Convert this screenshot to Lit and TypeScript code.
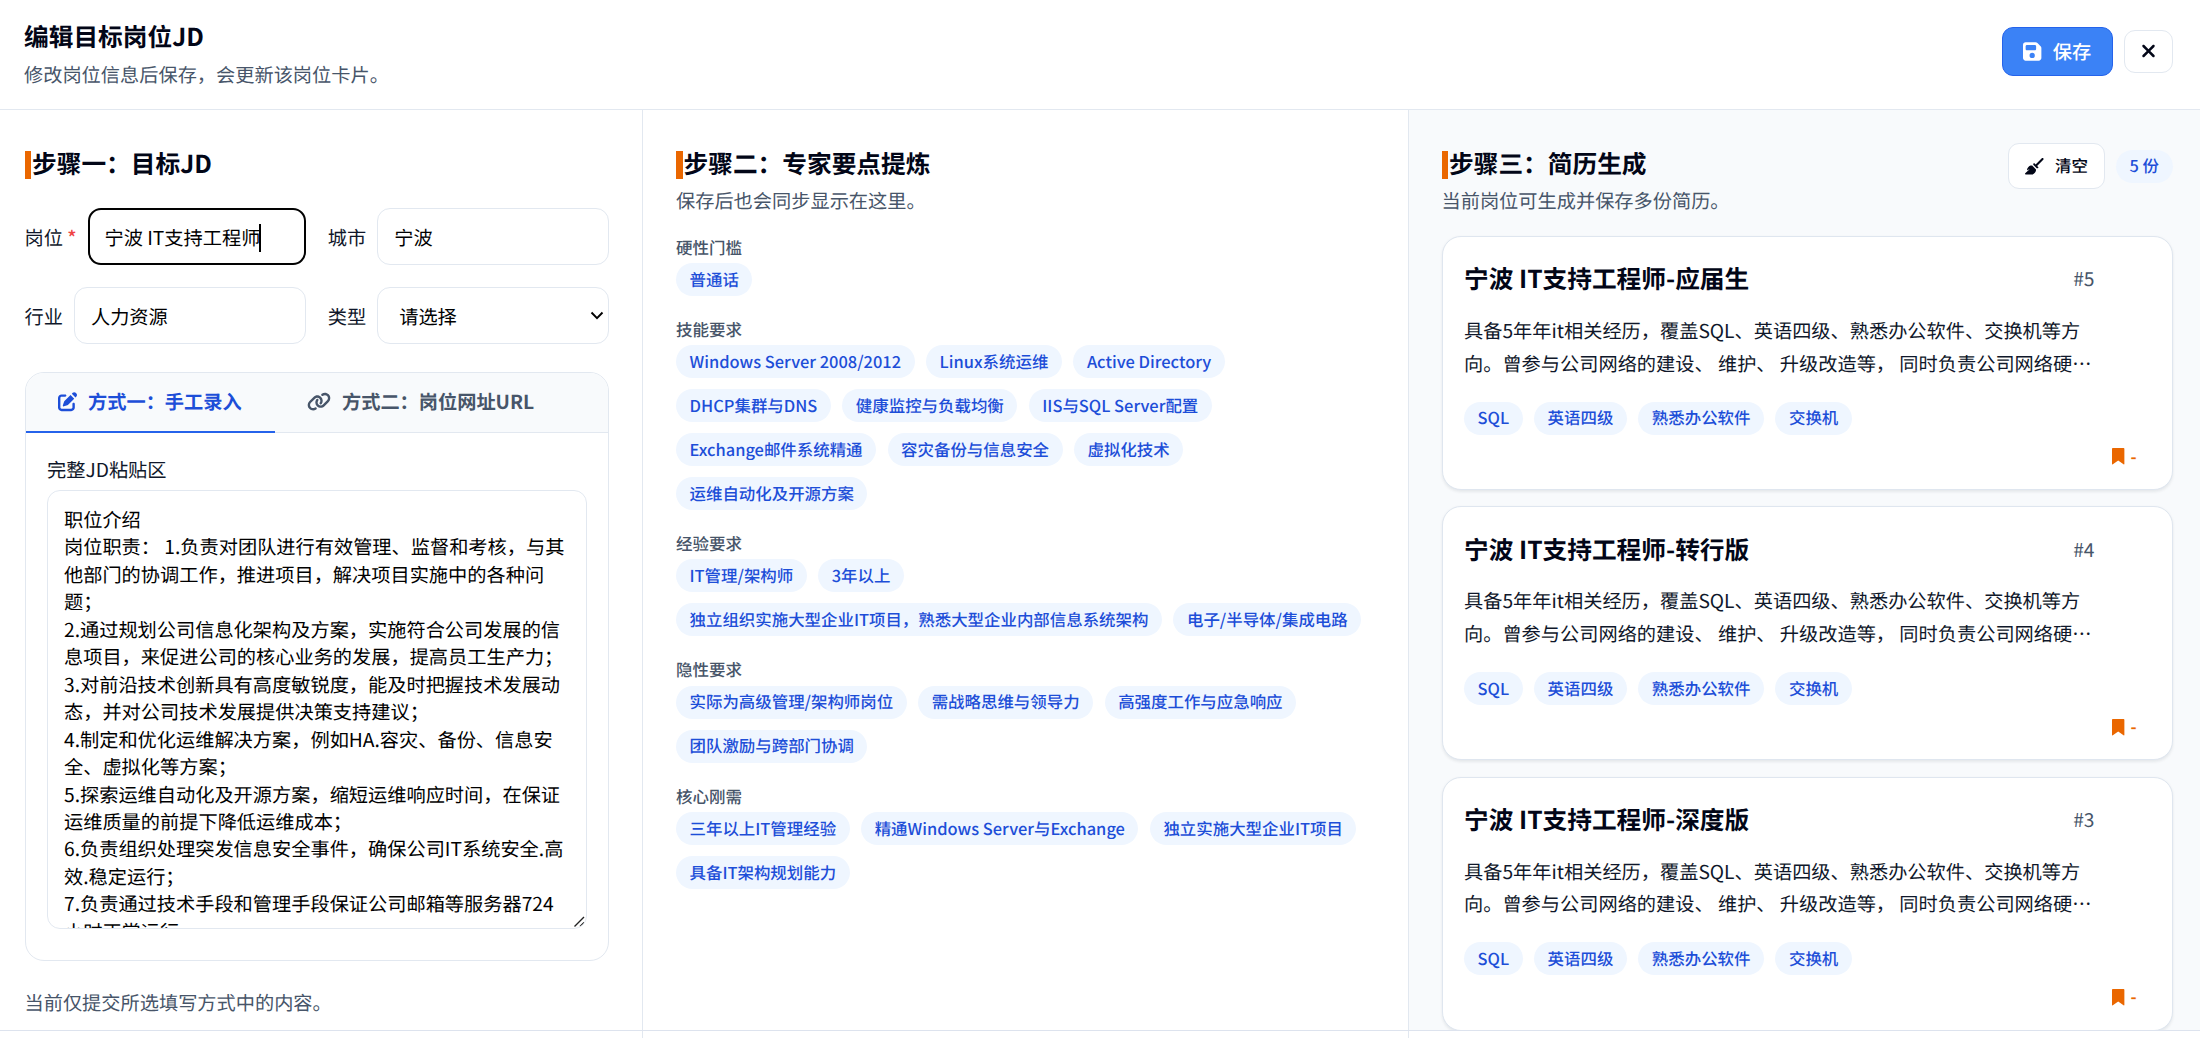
import { LitElement, html, css, svg } from "lit";
import { customElement, property } from "lit/decorators.js";

const SECTIONS = [
  { label: "硬性门槛", tags: ["普通话"] },
  {
    label: "技能要求",
    tags: [
      "Windows Server 2008/2012", "Linux系统运维", "Active Directory",
      "DHCP集群与DNS", "健康监控与负载均衡", "IIS与SQL Server配置",
      "Exchange邮件系统精通", "容灾备份与信息安全", "虚拟化技术", "运维自动化及开源方案",
    ],
  },
  {
    label: "经验要求",
    tags: ["IT管理/架构师", "3年以上", "独立组织实施大型企业IT项目，熟悉大型企业内部信息系统架构", "电子/半导体/集成电路"],
  },
  { label: "隐性要求", tags: ["实际为高级管理/架构师岗位", "需战略思维与领导力", "高强度工作与应急响应", "团队激励与跨部门协调"] },
  { label: "核心刚需", tags: ["三年以上IT管理经验", "精通Windows Server与Exchange", "独立实施大型企业IT项目", "具备IT架构规划能力"] },
];

const RESUMES = [
  { title: "宁波 IT支持工程师-应届生", no: "#5" },
  { title: "宁波 IT支持工程师-转行版", no: "#4" },
  { title: "宁波 IT支持工程师-深度版", no: "#3" },
];
const RESUME_DESC =
  "具备5年年it相关经历，覆盖SQL、英语四级、熟悉办公软件、交换机等方向。曾参与公司网络的建设、 维护、 升级改造等， 同时负责公司网络硬…";
const RESUME_TAGS = ["SQL", "英语四级", "熟悉办公软件", "交换机"];

const JD_TEXT = `职位介绍
岗位职责： 1.负责对团队进行有效管理、监督和考核，与其他部门的协调工作，推进项目，解决项目实施中的各种问题；
2.通过规划公司信息化架构及方案，实施符合公司发展的信息项目，来促进公司的核心业务的发展，提高员工生产力；
3.对前沿技术创新具有高度敏锐度，能及时把握技术发展动态，并对公司技术发展提供决策支持建议；
4.制定和优化运维解决方案，例如HA.容灾、备份、信息安全、虚拟化等方案；
5.探索运维自动化及开源方案，缩短运维响应时间，在保证运维质量的前提下降低运维成本；
6.负责组织处理突发信息安全事件，确保公司IT系统安全.高效.稳定运行；
7.负责通过技术手段和管理手段保证公司邮箱等服务器724小时正常运行`;

const ICONS: Record<string, { w: number; d: string }> = {
  save: { w: 448, d: "M64 32C28.700 32 0 60.700 0 96L0 416c0 35.300 28.700 64 64 64l320 0c35.300 0 64-28.700 64-64l0-242.700c0-17-6.700-33.300-18.700-45.300L352 50.700C340 38.700 323.700 32 306.700 32L64 32zm32 64l192 0c17.700 0 32 14.300 32 32l0 64c0 17.700-14.300 32-32 32L96 224c-17.700 0-32-14.300-32-32l0-64c0-17.700 14.300-32 32-32zM224 288a64 64 0 1 1 0 128 64 64 0 1 1 0-128z" },
  close: { w: 384, d: "M342.600 150.600c12.500-12.500 12.500-32.800 0-45.300s-32.800-12.500-45.300 0L192 210.700 86.600 105.400c-12.500-12.500-32.800-12.500-45.300 0s-12.500 32.800 0 45.300L146.700 256 41.400 361.400c-12.500 12.500-12.500 32.800 0 45.300s32.800 12.500 45.300 0L192 301.300 297.400 406.600c12.500 12.500 32.800 12.500 45.300 0s12.500-32.800 0-45.300L237.300 256 342.600 150.600z" },
  edit: { w: 512, d: "M471.600 21.700c-21.900-21.900-57.300-21.900-79.200 0L368 46.100 465.900 144 490.300 119.600c21.900-21.900 21.900-57.300 0-79.200L471.600 21.700zm-299.200 220c-6.100 6.100-10.800 13.600-13.500 21.900l-29.600 88.800c-2.900 8.600-.6 18.100 5.800 24.600s15.900 8.700 24.600 5.800l88.800-29.600c8.200-2.700 15.700-7.400 21.900-13.500L432 177.900 334.100 80 172.400 241.700zM96 64C43 64 0 107 0 160L0 416c0 53 43 96 96 96l256 0c53 0 96-43 96-96l0-96c0-17.700-14.300-32-32-32s-32 14.300-32 32l0 96c0 17.700-14.300 32-32 32L96 448c-17.700 0-32-14.300-32-32l0-256c0-17.700 14.300-32 32-32l96 0c17.700 0 32-14.300 32-32s-14.300-32-32-32L96 64z" },
  link: { w: 640, d: "M579.800 267.700c56.500-56.500 56.500-148 0-204.500c-50-50-128.800-56.500-186.300-15.400l-1.600 1.100c-14.400 10.300-17.700 30.300-7.400 44.600s30.300 17.700 44.600 7.400l1.600-1.100c32.100-22.900 76-19.300 103.800 8.600c31.500 31.500 31.500 82.500 0 114L422.300 334.800c-31.500 31.500-82.500 31.500-114 0c-27.900-27.900-31.500-71.800-8.600-103.800l1.100-1.600c10.300-14.400 6.900-34.400-7.400-44.600s-34.400-6.900-44.600 7.400l-1.100 1.600C206.500 251.200 213 330 263 380c56.500 56.500 148 56.500 204.500 0L579.800 267.700zM60.200 244.300c-56.500 56.500-56.500 148 0 204.500c50 50 128.800 56.500 186.300 15.400l1.600-1.100c14.400-10.300 17.700-30.300 7.400-44.600s-30.300-17.700-44.600-7.400l-1.600 1.100c-32.100 22.900-76 19.300-103.800-8.600C74 372 74 321 105.500 289.500L217.700 177.200c31.500-31.500 82.500-31.500 114 0c27.900 27.900 31.500 71.800 8.600 103.900l-1.100 1.600c-10.300 14.400-6.900 34.400 7.400 44.600s34.400 6.900 44.600-7.400l1.100-1.600C433.500 260.800 427 182 377 132c-56.500-56.500-148-56.500-204.500 0L60.200 244.300z" },
  broom: { w: 576, d: "M566.600 54.600c12.500-12.500 12.500-32.800 0-45.300s-32.800-12.500-45.300 0l-192 192-34.700-34.700c-4.200-4.200-10-6.600-16-6.600c-12.500 0-22.600 10.100-22.600 22.600l0 29.100L364.300 320l29.100 0c12.500 0 22.600-10.100 22.600-22.600c0-6-2.400-11.800-6.600-16l-34.700-34.700 192-192zM341.100 353.400L222.600 234.900c-42.700-3.700-85.200 11.700-115.800 42.300l-8 8C76.500 307.500 64 337.700 64 369.200c0 6.800 7.100 11.200 13.200 8.200l51.100-25.500c5-2.500 9.500 4.100 5.400 7.900L7.300 473.400C2.700 477.600 0 483.600 0 489.900C0 502.100 9.900 512 22.100 512l173.300 0c38.800 0 75.900-15.400 103.400-42.800c30.600-30.600 45.900-73.100 42.300-115.800z" },
  bookmark: { w: 384, d: "M0 24V500C0 508 8 514 16 509L192 390 368 509C376 514 384 508 384 500V24C384 10 374 0 360 0H24C10 0 0 10 0 24z" },
};

const icon = (name: string) => {
  const { w, d } = ICONS[name];
  return html`<svg class="icon icon-${name}" viewBox="0 0 ${w} 512" fill="currentColor" fill-rule=${name === "save" ? "evenodd" : "nonzero"}>${svg`<path d=${d}></path>`}</svg>`;
};

const shared = css`
  * { box-sizing: border-box; }
  .icon { display: block; flex: none; height: 1em; overflow: visible; }
  .tags { display: flex; flex-wrap: wrap; gap: 11px 11.5px; }
  .tag {
    display: flex; align-items: center; height: 33px; padding: 0 13.5px;
    border-radius: 17px; background: #eff6ff; color: #1d4ed8;
    font-size: 16.45px; font-weight: 500; white-space: nowrap;
  }
`;

@customElement("resume-card")
class ResumeCard extends LitElement {
  @property() heading = "";
  @property() no = "";

  static styles = [
    shared,
    css`
      :host { display: block; flex: none; }
      .card {
        height: 254px; padding: 22px 77px 0 21.5px; border: 1.375px solid #dfe6ef; border-radius: 19px;
        background: #fff; box-shadow: 0 1.5px 3px rgba(15, 23, 42, 0.08);
        display: flex; flex-direction: column;
      }
      .head { display: flex; justify-content: space-between; align-items: center; height: 40px; }
      .title { font-size: 24.7px; font-weight: 700; color: #020617; }
      .no { color: #475569; }
      .desc { margin: 15px 0 22px; color: #0f172a; line-height: 32.8px; font-size: 19.2px; }
      .foot { display: flex; align-items: center; gap: 6px; align-self: flex-end; margin: 10px -42px 0 0; color: #ea6700; height: 24px; font-size: 16.5px; font-weight: 700; }
    `,
  ];

  render() {
    return html`<div class="card">
      <div class="head"><div class="title">${this.heading}</div><div class="no">${this.no}</div></div>
      <div class="desc">${RESUME_DESC}</div>
      <div class="tags">${RESUME_TAGS.map((t) => html`<span class="tag">${t}</span>`)}</div>
      <div class="foot">${icon("bookmark")}<span>-</span></div>
    </div>`;
  }
}

@customElement("app-root")
class AppRoot extends LitElement {
  static styles = [
    shared,
    css`
      :host {
        display: flex; flex-direction: column; width: 2200px; height: 1038px; overflow: hidden;
        background: #fff; color: #0f172a; font-family: "Noto Sans CJK SC", sans-serif;
        font-size: 19.22px; line-height: 27.5px; text-rendering: geometricPrecision;
      }
      .header {
        display: flex; justify-content: space-between; align-items: flex-start;
        height: 110px; flex: none; padding: 0 27.5px 0 24px; border-bottom: 1.375px solid #e2e8f0;
      }
      .titles { padding-top: 18px; }
      .page-title { font-size: 24.7px; line-height: 36px; font-weight: 700; color: #020617; }
      .muted { color: #475569; }
      .page-sub { margin-top: 7px; }
      .actions { display: flex; align-items: center; gap: 11px; padding-top: 26.5px; }
      .btn {
        display: flex; align-items: center; justify-content: center; gap: 11px;
        border: 1.375px solid #e2e8f0; border-radius: 11px; background: #fff; color: #020617;
      }
      .btn-save { width: 110.5px; height: 49.5px; padding-top: 1.5px; background: #3b82f6; border-color: #2563eb; color: #fff; font-weight: 500; }
      .btn-close { width: 49px; height: 43px; padding-bottom: 1px; border-radius: 11px; }
      .icon-save { height: 21px; margin-top: -2px; }
      .icon-close { height: 20px; }
      .btn-clear { width: 96.5px; height: 46px; font-size: 16.5px; font-weight: 500; }
      .body { display: grid; grid-template-columns: 643px 765.5px 1fr; height: 920px; flex: none; }
      .col { padding: 33px 33px 0; overflow: hidden; min-width: 0; border-right: 1.375px solid #e2e8f0; }
      .col-input { padding-left: 24.5px; }
      .col-resumes { background: #f8fafc; border-right: 0; padding-right: 27.5px; }
      .step { display: flex; height: 44px; align-items: center; font-size: 24.7px; line-height: 36px; font-weight: 700; color: #020617; padding-bottom: 4px; }
      .step::before { content: ""; width: 6.5px; height: 28.5px; margin: 4px 1px 0 0; background: #ea6700; }
      .form { display: grid; grid-template-columns: 1fr 1fr; gap: 22px; margin-top: 21px; }
      .field { display: flex; align-items: center; gap: 11px; height: 57px; }
      .field-label { flex: none; padding-top: 2px; white-space: nowrap; }
      .required { color: #ef4444; font-weight: 500; }
      .control {
        flex: 1; height: 57px; display: flex; align-items: center; padding: 3px 16px 0;
        border: 1.375px solid #e2e8f0; border-radius: 13px; color: #000; background: #fff; white-space: nowrap;
      }
      .control-focus { border: 2.75px solid #020202; padding-left: 15px; }
      .caret { width: 1.5px; height: 28px; margin-left: -1px; background: #000; }
      .control-select { justify-content: space-between; padding: 3px 4px 0 21px; }
      .chevron { width: 14px; height: 9px; margin-top: -3px; }
      .panel { margin-top: 28px; border: 1.375px solid #e2e8f0; border-radius: 19px; height: 588.5px; overflow: hidden; }
      .tabs { display: flex; height: 60px; background: #f8fafc; border-bottom: 1.375px solid #e2e8f0; }
      .tab { display: flex; align-items: center; gap: 11px; padding: 0 33px 2px 32.3px; font-weight: 600; color: #475569; height: 60px; white-space: nowrap; }
      .tab-active { padding-bottom: 0; color: #1d4ed8; border-bottom: 2.75px solid #2563eb; }
      .panel-body { padding: 23px 21.5px 0; }
      .area {
        position: relative; height: 438.5px; margin-top: 6.5px; padding: 15px 16px 0; overflow: hidden;
        border: 1.375px solid #e2e8f0; border-radius: 13px; color: #000; white-space: pre-wrap; line-height: 27.45px;
      }
      .grip { position: absolute; right: 1px; bottom: 1px; width: 11px; height: 11px; }
      .note { margin-top: 28.5px; }
      .sections { display: flex; flex-direction: column; gap: 22px; margin-top: 21px; }
      .section-label { font-size: 16.5px; line-height: 23.3px; margin-bottom: 4px; font-weight: 500; color: #475569; }
      .resume-head { display: flex; justify-content: space-between; height: 78px; }
      .resume-tools { display: flex; align-items: center; gap: 11px; height: 46px; }
      .list { display: flex; flex-direction: column; gap: 16.3px; margin-top: 15px; }
      .footer { flex: none; height: 8px; display: grid; grid-template-columns: 643px 765.5px 1fr; border-top: 1.375px solid #dde3ee; background: #fff; }
      .footer-cell { border-right: 1.375px solid #e2e8f0; }
    `,
  ];

  render() {
    return html`
      <div class="header">
        <div class="titles">
          <div class="page-title">编辑目标岗位JD</div>
          <div class="page-sub muted">修改岗位信息后保存，会更新该岗位卡片。</div>
        </div>
        <div class="actions">
          <div class="btn btn-save">${icon("save")}<span>保存</span></div>
          <div class="btn btn-close">${icon("close")}</div>
        </div>
      </div>
      <div class="body">
        <div class="col col-input">
          <div class="step">步骤一：目标JD</div>
          <div class="form">
            <div class="field">
              <div class="field-label">岗位 <span class="required">*</span></div>
              <div class="control control-focus">宁波 IT支持工程师<span class="caret"></span></div>
            </div>
            <div class="field"><div class="field-label">城市</div><div class="control">宁波</div></div>
            <div class="field"><div class="field-label">行业</div><div class="control">人力资源</div></div>
            <div class="field">
              <div class="field-label">类型</div>
              <div class="control control-select">
                <span>请选择</span>
                <svg class="chevron" viewBox="0 0 14 9" fill="none" stroke="#000" stroke-width="1.900"><path d="M1.500 1.500 7 7.200l5.500-5.700"></path></svg>
              </div>
            </div>
          </div>
          <div class="panel">
            <div class="tabs">
              <div class="tab tab-active">${icon("edit")}<span>方式一：手工录入</span></div>
              <div class="tab">${icon("link")}<span>方式二：岗位网址URL</span></div>
            </div>
            <div class="panel-body">
              <div>完整JD粘贴区</div>
              <div class="area">${JD_TEXT}<svg class="grip" viewBox="0 0 11 11" stroke="#222" stroke-width="1.400"><path d="M0.500 10.500 10 1M6 10.500 10 6.500"></path></svg></div>
            </div>
          </div>
          <div class="note muted">当前仅提交所选填写方式中的内容。</div>
        </div>
        <div class="col">
          <div class="step">步骤二：专家要点提炼</div>
          <div class="muted">保存后也会同步显示在这里。</div>
          <div class="sections">
            ${SECTIONS.map((s) => html`<div>
              <div class="section-label">${s.label}</div>
              <div class="tags">${s.tags.map((t) => html`<span class="tag">${t}</span>`)}</div>
            </div>`)}
          </div>
        </div>
        <div class="col col-resumes">
          <div class="resume-head">
            <div>
              <div class="step">步骤三：简历生成</div>
              <div class="muted">当前岗位可生成并保存多份简历。</div>
            </div>
            <div class="resume-tools">
              <div class="btn btn-clear">${icon("broom")}<span>清空</span></div>
              <span class="tag">5 份</span>
            </div>
          </div>
          <div class="list">
            ${RESUMES.map((r) => html`<resume-card heading=${r.title} no=${r.no}></resume-card>`)}
          </div>
        </div>
      </div>
      <div class="footer"><div class="footer-cell"></div><div class="footer-cell"></div></div>
    `;
  }
}
